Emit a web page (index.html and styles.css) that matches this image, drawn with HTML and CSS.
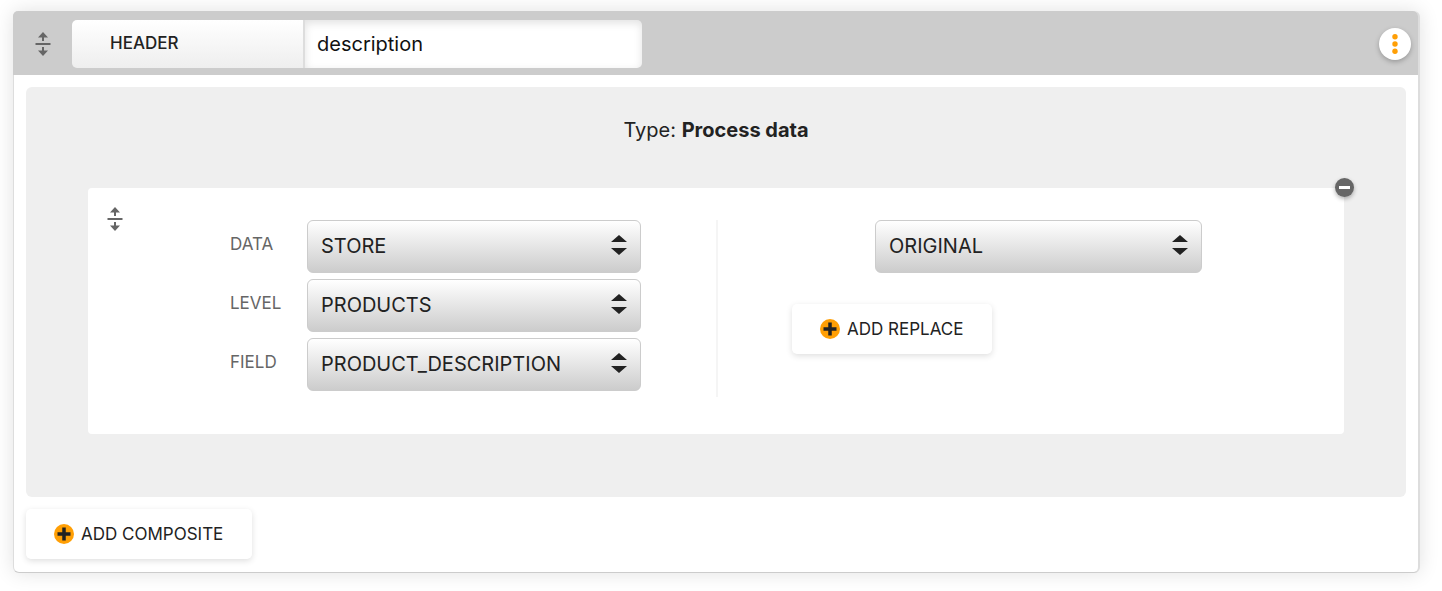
FILE: index.html
```
<!DOCTYPE html>
<html lang="en">
<head>
    <meta charset="UTF-8">
    <meta name="viewport" content="width=device-width, initial-scale=1.0">
    <title>Header mapping</title>
    <link rel="stylesheet" href="styles.css">
</head>
<body>
<svg class="sprite" aria-hidden="true">
    <symbol id="icon-drag" viewBox="0 0 16 26">
        <path d="M8 1l5 5.500H9V10H7V6.500H3zM.5 12h15v2H.5zM7 16h2v3.500h4L8 25l-5-5.500h4z"/>
    </symbol>
    <symbol id="icon-plus" viewBox="0 0 20 20">
        <circle class="plus-disc" cx="10" cy="10" r="10"/>
        <path class="plus-cross" d="M10 3.500v13M3.500 10h13"/>
    </symbol>
</svg>

<main class="card">
    <!-- Header bar -->
    <div class="card-header">
        <button class="drag-handle" type="button" aria-label="Move header"><svg><use href="#icon-drag"/></svg></button>
        <div class="header-field">
            <label for="headerName">HEADER</label>
            <input id="headerName" type="text" value="description">
        </div>
        <button class="menu-btn" type="button" aria-label="More options">
            <svg viewBox="0 0 6 20"><circle cx="3" cy="2.700" r="2.700"/><circle cx="3" cy="10" r="2.700"/><circle cx="3" cy="17.300" r="2.700"/></svg>
        </button>
    </div>

    <div class="card-body">
        <section class="panel">
            <p class="panel-type">Type: <strong>Process data</strong></p>

            <!-- Composite item -->
            <div class="composite">
                <button class="remove-btn" type="button" aria-label="Remove"></button>
                <button class="drag-handle" type="button" aria-label="Move item"><svg><use href="#icon-drag"/></svg></button>
                <div class="source">
                    <div class="field">
                        <label for="data">DATA</label>
                        <select id="data" class="select"><option>STORE</option></select>
                    </div>
                    <div class="field">
                        <label for="level">LEVEL</label>
                        <select id="level" class="select"><option>PRODUCTS</option></select>
                    </div>
                    <div class="field">
                        <label for="field">FIELD</label>
                        <select id="field" class="select"><option>PRODUCT_DESCRIPTION</option></select>
                    </div>
                </div>
                <div class="transform">
                    <select class="select" aria-label="Transform"><option>ORIGINAL</option></select>
                    <button class="btn" type="button"><svg><use href="#icon-plus"/></svg>ADD REPLACE</button>
                </div>
            </div>
        </section>

        <button class="btn" type="button"><svg><use href="#icon-plus"/></svg>ADD COMPOSITE</button>
    </div>
</main>
</body>
</html>
```
FILE: styles.css
```
:root {
    --accent: #ff9f05;
    --bar: #ccc;
    --panel: #efefef;
    --text: #222;
    --muted: #666;
}

* {
    box-sizing: border-box;
}

body {
    font-family: Inter, "Liberation Sans", sans-serif;
    background: #fff;
    color: var(--text);
    margin: 0;
    padding: 11px 22px 18px 13px;
}

button,
input,
select {
    font-family: inherit;
    color: inherit;
}

button {
    border: none;
    padding: 0;
    cursor: pointer;
}

.sprite {
    position: absolute;
    width: 0;
    height: 0;
}

.card {
    background: #fff;
    border: 1px solid #ccc;
    border-top: none;
    border-left-color: #ddd;
    border-right: 2px solid #ddd;
    border-radius: 6px;
    box-shadow: 0 0 20px rgb(0 0 0 / 0.12);
}

.card-header {
    display: flex;
    align-items: center;
    height: 64px;
    margin-left: -1px;
    padding: 1px 7px 0 22px;
    background: var(--bar);
    border-radius: 5px 5px 0 0;
}

.drag-handle {
    background: none;
    cursor: grab;
}

.drag-handle svg {
    display: block;
    width: 16px;
    height: 26px;
    fill: var(--muted);
}

.header-field {
    display: flex;
    width: 570px;
    height: 48px;
    margin-left: 21px;
    border-radius: 5px;
    overflow: hidden;
}

.header-field label {
    width: 231px;
    padding-left: 38px;
    background: linear-gradient(#fff, #eee);
    font-size: 17px;
    font-weight: 500;
    line-height: 46px;
}

.header-field input {
    flex: 1;
    min-width: 0;
    padding: 0 12px;
    border: none;
    border-left: 2px solid #ddd;
    background: #fff;
    box-shadow: inset 0 3px 8px rgb(0 0 0 / 0.12);
    color: #111;
    font-size: 20px;
}

.menu-btn {
    display: grid;
    place-items: center;
    width: 32px;
    height: 32px;
    margin-left: auto;
    border-radius: 50%;
    background: #fff;
    box-shadow: 0 2px 5px rgb(0 0 0 / 0.25);
}

.menu-btn svg {
    width: 6px;
    height: 20px;
    fill: var(--accent);
}

.card-body {
    padding: 12px 12px 13px;
}

.panel {
    margin-bottom: 12px;
    padding: 28px 62px 63px;
    background: var(--panel);
    border-radius: 6px;
}

.panel-type {
    margin: 0 0 43px;
    font-size: 20px;
    line-height: 30px;
    text-align: center;
}

.panel-type strong {
    font-weight: 700;
}

.composite {
    position: relative;
    display: flex;
    align-items: flex-start;
    padding: 32px 0 37px;
    background: #fff;
    border-radius: 4px;
}

.composite > .drag-handle {
    position: absolute;
    top: 18px;
    left: 19px;
}

.remove-btn {
    position: absolute;
    top: -10px;
    right: -10px;
    display: grid;
    place-items: center;
    width: 19px;
    height: 19px;
    border-radius: 50%;
    background: var(--muted);
    box-shadow: 0 2px 4px rgb(0 0 0 / 0.3);
}

.remove-btn::before {
    content: "";
    width: 11px;
    height: 3px;
    background: #fff;
}

.source {
    width: calc(50% + 2px);
    padding: 0 75px 0 142px;
    border-right: 2px solid #f5f5f5;
}

.field {
    display: grid;
    grid-template-columns: 77px 1fr;
    margin-bottom: 6px;
}

.field label {
    color: var(--muted);
    font-size: 17px;
    line-height: 48px;
}

/* up and down arrows over the gradient */
.select {
    appearance: none;
    width: 100%;
    min-width: 0;
    height: 53px;
    padding: 0 48px 2px 13px;
    border: 1px solid #ccc;
    border-radius: 6px;
    background-image: url("data:image/svg+xml,%3Csvg xmlns='http://www.w3.org/2000/svg' width='16' height='20' fill='%23222'%3E%3Cpath d='M8 0l8 7H0zM0 13h16l-8 7z'/%3E%3C/svg%3E"), linear-gradient(#fff, #ccc);
    background-position: right 13px top 14px, 0 0;
    background-repeat: no-repeat;
    font-size: 20px;
}

.transform {
    flex: 1;
    padding-left: 74px;
}

.transform .select {
    display: block;
    width: calc(100% - 225px);
    margin: 0 0 31px 83px;
}

.btn {
    display: inline-flex;
    align-items: center;
    gap: 7px;
    height: 50px;
    padding: 0 29px 0 28px;
    border-radius: 5px;
    background: #fff;
    box-shadow: 0 2px 6px rgb(0 0 0 / 0.13);
    font-size: 17px;
    vertical-align: top;
}

.btn svg {
    width: 20px;
    height: 20px;
}

.plus-disc {
    fill: var(--accent);
}

.plus-cross {
    stroke: var(--text);
    stroke-width: 3.5;
}

@media (max-width: 1000px) {
    .composite {
        flex-direction: column;
        gap: 24px;
        padding: 56px 24px 24px;
    }

    .source,
    .transform {
        width: 100%;
        padding: 0;
        border: none;
    }

    .transform .select {
        width: 100%;
        margin-left: 0;
    }
}
```
